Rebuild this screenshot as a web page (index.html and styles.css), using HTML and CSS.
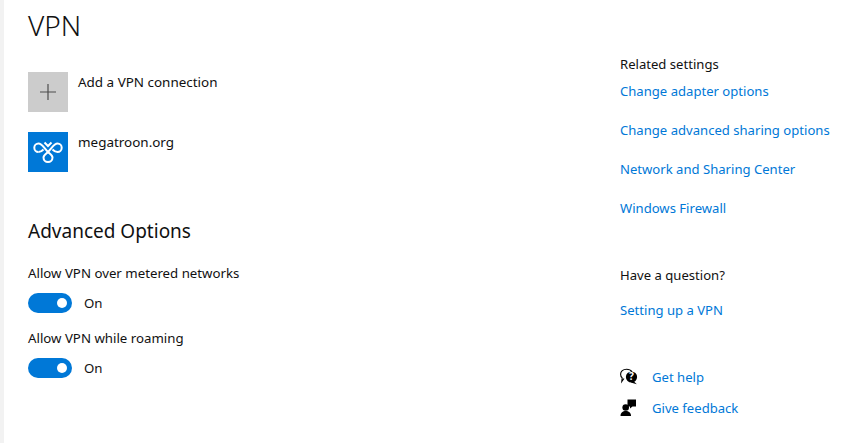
FILE: index.html
```html
<!DOCTYPE html>
<html lang="en">
<head>
  <meta charset="UTF-8">
  <title>VPN</title>
  <link rel="stylesheet" href="styles.css">
</head>
<body>
  <div class="page">
    <main class="content">
      <h1>VPN</h1>

      <div class="vpn-item">
        <div class="tile tile-add">
          <svg width="16" height="16" viewBox="0 0 16 16"><path d="M8 0v16M0 8h16" stroke="#4d4d4d" stroke-width="1.2" fill="none"/></svg>
        </div>
        <span class="vpn-name">Add a VPN connection</span>
      </div>

      <div class="vpn-item">
        <div class="tile tile-conn">
          <svg width="40" height="40" viewBox="0 0 40 40" fill="none" stroke="#fff" stroke-width="2">
            <path d="M10.500 20a4.200 4.200 0 1 1 0-8.400c3.500 0 5.500 4.500 9.500 8.400 2.500 2.200 4.500 3.500 4.500 5.500a4.500 4.500 0 0 1-9 0c0-2 2-3.300 4.500-5.500 4-3.900 6-8.400 9.500-8.400a4.200 4.200 0 1 1 0 8.400c-2 0-3.500-1-5-2.500"/>
            <path d="M10.500 20c2 0 3.500-1 5-2.500"/>
            <path d="M16.500 10.500 20 14l3.500-3.500"/>
          </svg>
        </div>
        <span class="vpn-name">megatroon.org</span>
      </div>

      <h2>Advanced Options</h2>

      <div class="option">
        <div class="option-label">Allow VPN over metered networks</div>
        <div class="toggle-row">
          <span class="toggle"><span class="knob"></span></span>
          <span>On</span>
        </div>
      </div>

      <div class="option">
        <div class="option-label">Allow VPN while roaming</div>
        <div class="toggle-row">
          <span class="toggle"><span class="knob"></span></span>
          <span>On</span>
        </div>
      </div>
    </main>

    <aside class="side">
      <div class="side-title">Related settings</div>
      <a class="side-link first" href="#">Change adapter options</a>
      <a class="side-link" href="#">Change advanced sharing options</a>
      <a class="side-link" href="#">Network and Sharing Center</a>
      <a class="side-link" href="#">Windows Firewall</a>

      <div class="side-title question">Have a question?</div>
      <a class="side-link answer" href="#">Setting up a VPN</a>

      <div class="help-row help-first">
        <svg width="18" height="18" viewBox="0 0 18 18">
          <path d="M4 10.500 1.800 13.500l.4-3.600C1 8.900.6 7.500.6 6.200.6 3.300 3 1.200 6.500 1.200c2.500 0 4.500 1 5.500 2.500" fill="#fff" stroke="#000" stroke-width="1.100"/>
          <circle cx="11.500" cy="9" r="5.600" fill="#000"/>
          <path d="M13.500 13l3.300 3.300-6-1.800z" fill="#000"/>
          <text x="11.500" y="12.400" class="help-mark">?</text>
        </svg>
        <a href="#">Get help</a>
      </div>
      <div class="help-row">
        <svg width="18" height="18" viewBox="0 0 18 18" fill="#000">
          <path d="M7.500 .5H16v7h-3.500L10 9.500v-2H7.500z"/>
          <circle cx="5.700" cy="8.500" r="3.300"/>
          <path d="M.5 17c0-3.200 2.200-5 5.200-5s5.300 1.800 5.300 5z"/>
        </svg>
        <a href="#">Give feedback</a>
      </div>
    </aside>
  </div>
</body>
</html>
```

FILE: styles.css
```css
* {
  box-sizing: border-box;
}

html, body {
  margin: 0;
  height: 100%;
  overflow: hidden;
}

body {
  font-family: 'Noto Sans', 'Open Sans', sans-serif;
  font-size: 13.25px;
  color: #111;
  background-color: #fff;
}

.page {
  display: flex;
  height: 443px;
  border-left: 4px solid #f2f2f2;
}

.content {
  width: 616px;
  padding: 8px 0 0 24px;
}

h1 {
  margin: 0 0 29px;
  font-size: 28px;
  font-weight: 300;
  line-height: 35px;
}

h2 {
  margin: 46px 0 20px;
  font-size: 19px;
  font-weight: 400;
  line-height: 26px;
}

.vpn-item {
  display: flex;
  gap: 10px;
  margin-bottom: 20px;
}

.tile {
  display: flex;
  align-items: center;
  justify-content: center;
  width: 40px;
  height: 40px;
}

.tile-add {
  background-color: #cccccc;
}

.tile-conn {
  background-color: #0078d7;
}

.vpn-name {
  font-size: 13.45px;
  line-height: 20px;
}

.option {
  margin-bottom: 16px;
}

.option-label {
  line-height: 18px;
}

.toggle-row {
  display: flex;
  align-items: center;
  gap: 12px;
  height: 20px;
  margin-top: 11px;
}

.toggle {
  display: flex;
  align-items: center;
  justify-content: flex-end;
  width: 44px;
  height: 20px;
  padding-right: 5px;
  border-radius: 10px;
  background-color: #0078d7;
}

.knob {
  width: 10px;
  height: 10px;
  border-radius: 50%;
  background-color: #fff;
}

.side {
  padding-top: 55px;
  font-size: 13.1px;
}

.side-title {
  line-height: 18px;
}

.question {
  margin-top: 49px;
}

.side-link {
  display: block;
  margin-top: 21px;
  line-height: 18px;
  color: #0078d7;
  text-decoration: none;
}

.side-link.first {
  margin-top: 9px;
}

.side-link.answer {
  margin-top: 17px;
}

.help-row {
  display: flex;
  align-items: center;
  gap: 14px;
  height: 18px;
  margin-top: 13px;
}

.help-first {
  margin-top: 49px;
}

.help-row a {
  color: #0078d7;
  text-decoration: none;
}

.help-mark {
  font-size: 10px;
  font-weight: 700;
  fill: #fff;
  text-anchor: middle;
}
```
